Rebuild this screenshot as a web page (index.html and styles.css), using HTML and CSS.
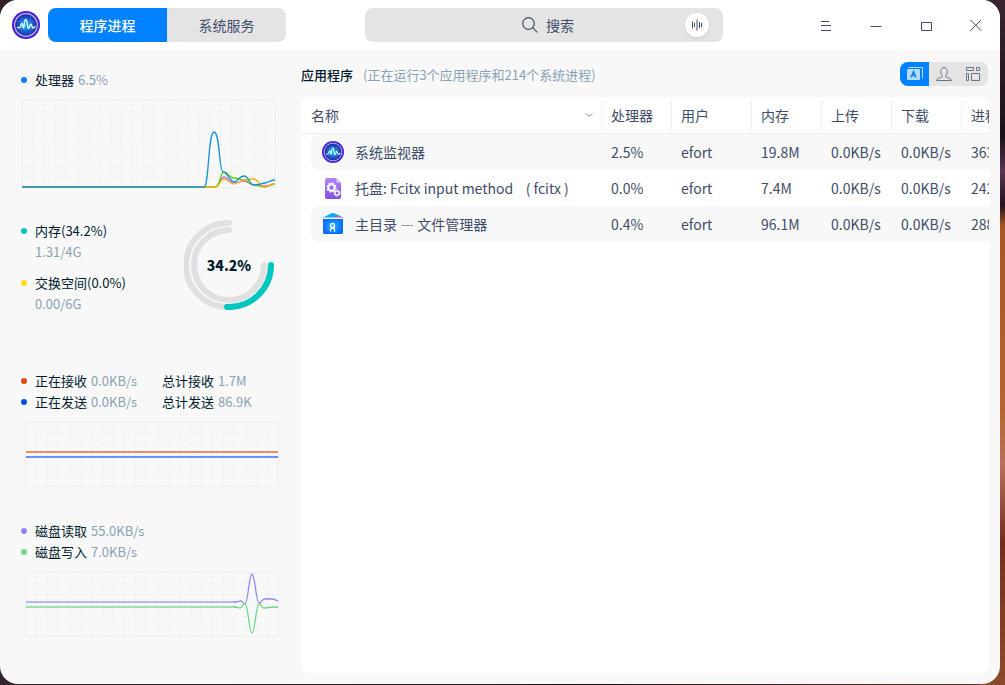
FILE: index.html
```html
<!DOCTYPE html>
<html lang="zh-CN">
<head>
    <meta charset="UTF-8">
    <meta name="viewport" content="width=device-width, initial-scale=1.0">
    <title>系统监视器</title>
    <link rel="stylesheet" href="styles.css">
</head>
<body>
    <!-- Shared icon and grid definitions -->
    <svg class="defs" width="0" height="0" aria-hidden="true">
        <defs>
            <radialGradient id="monitor-fill">
                <stop offset="0" stop-color="#16c4f5"/>
                <stop offset="0.55" stop-color="#1764cf"/>
                <stop offset="1" stop-color="#22219b"/>
            </radialGradient>
            <linearGradient id="file-fill" x1="0" y1="0" x2="0" y2="1">
                <stop offset="0" stop-color="#b087f8"/>
                <stop offset="1" stop-color="#8450e2"/>
            </linearGradient>
            <radialGradient id="folder-fill">
                <stop offset="0" stop-color="#1fb4ff"/>
                <stop offset="1" stop-color="#0b6cfa"/>
            </radialGradient>
            <pattern id="grid" width="11" height="11" patternUnits="userSpaceOnUse">
                <path d="M0 .5h2M4 .5h3M9 .5h2M.5 0v2M.5 4v3M.5 9v2" stroke="#f0f0f0" fill="none"/>
            </pattern>
            <symbol id="monitor" viewBox="0 0 28 28">
                <circle cx="14" cy="14" r="14" fill="#4b20d2"/>
                <circle cx="14" cy="14" r="11.300" fill="url(#monitor-fill)" stroke="#b9b2f5" stroke-width="1.2"/>
                <path d="M4 10.5h20M4 18h20M9.5 5v18M18.5 5v18" stroke="#5a8ee8" stroke-width=".5" opacity=".7"/>
                <path d="M5 16.500h2.500c1.800 0 1-4 2.300-4s.8 4.500 1.700 4.500S12 8.500 13.700 8.500s1.500 9 2.900 9 1-4.500 2.200-4.500 1 4 2.200 4 1-1.500 2.400-1.500" fill="none" stroke="#d8fbff" stroke-width="1.400"/>
            </symbol>
        </defs>
    </svg>

    <div class="window">
        <!-- Title bar -->
        <header class="titlebar">
            <svg class="logo" width="28" height="28"><use href="#monitor"/></svg>
            <nav class="tabs">
                <button type="button" class="tab active">程序进程</button>
                <button type="button" class="tab">系统服务</button>
            </nav>
            <form class="search">
                <svg width="16" height="16" viewBox="0 0 16 16" fill="none" stroke="#414d68" stroke-width="1.2"><circle cx="6.500" cy="6.500" r="5.800"/><path d="M10.700 10.700L15.300 15.300"/></svg>
                <input type="search" placeholder="搜索" aria-label="搜索">
                <button type="button" class="voice" aria-label="语音">
                    <svg width="12" height="12" viewBox="0 0 12 12" stroke="#414d68"><path d="M1.500 2.500v7M3.500 4v4M6 .5v11M8.500 3v6M10.500 4v4"/></svg>
                </button>
            </form>
            <div class="controls">
                <button type="button" aria-label="菜单"><svg width="12" height="12" viewBox="0 0 12 12"><path d="M1 2.500h8M1 6.500h10M1 11.500h10"/></svg></button>
                <button type="button" aria-label="最小化"><svg width="12" height="12" viewBox="0 0 12 12"><path d="M.5 7.500h11"/></svg></button>
                <button type="button" aria-label="最大化"><svg width="12" height="12" viewBox="0 0 12 12"><path d="M1.500 3.500h10v8h-10z"/></svg></button>
                <button type="button" aria-label="关闭"><svg width="12" height="12" viewBox="0 0 12 12"><path d="M.5 1l10.500 10.500M11 1L.5 11.500"/></svg></button>
            </div>
        </header>

        <div class="content">
            <!-- Resource graphs -->
            <aside class="sidebar">
                <section class="cpu">
                    <p class="stat blue">处理器 <span>6.5%</span></p>
                    <svg class="chart" width="254" height="88">
                        <rect width="254" height="88" fill="url(#grid)"/>
                        <rect class="frame" x=".5" y=".5" width="253" height="87"/>
                        <g class="lines">
                            <path stroke="#c76cf5" d="M0 87H193C197 87 198 77 202 77S208 83 212 83S218 81 222 81S228 85 232 85S239 86 243 86S248 84 253 84"/>
                            <path stroke="#5ed000" d="M0 87H193C198 87 198 72 202 72S207 78 212 78S218 80 222 80S227 85 232 85S239 87 243 87S248 84 253 84"/>
                            <path stroke="#f7b21b" d="M0 87H193C198 87 198 79 202 79S208 84 212 84S218 80 222 80S228 79 232 79S238 87 242 87S248 84 253 84"/>
                            <path stroke="#1492d8" d="M0 87H182C187 87 186 32 192 32S197 72 201 72C206 72 208 82 212 82S217 76 222 76S227 85 232 85S240 83 243 83S248 80 253 80"/>
                        </g>
                    </svg>
                </section>
                <section class="memory">
                    <div>
                        <p class="stat teal">内存(34.2%)</p>
                        <p class="amount">1.31/4G</p>
                        <p class="stat yellow">交换空间(0.0%)</p>
                        <p class="amount">0.00/6G</p>
                    </div>
                    <svg class="ring" width="90" height="90" viewBox="0 0 90 90">
                        <path d="M45 3A42 42 0 0 0 43 87M45 10A35 35 0 1 0 80 45"/>
                        <path class="used" d="M87 45A42 42 0 0 1 43 87"/>
                        <text x="45" y="51">34.2%</text>
                    </svg>
                </section>
                <section class="network">
                    <div class="pairs">
                        <p class="stat orange">正在接收 <span>0.0KB/s</span></p>
                        <p class="total">总计接收 <span>1.7M</span></p>
                        <p class="stat royal">正在发送 <span>0.0KB/s</span></p>
                        <p class="total">总计发送 <span>86.9K</span></p>
                    </div>
                    <svg class="chart small" width="254" height="65">
                        <rect width="254" height="65" fill="url(#grid)"/>
                        <rect class="frame" x=".5" y=".5" width="253" height="64"/>
                        <path stroke="#e98d68" stroke-width="2" d="M1 30H253"/>
                        <path stroke="#6694f0" stroke-width="2" d="M1 35H253"/>
                    </svg>
                </section>
                <section class="disk">
                    <p class="stat violet">磁盘读取 <span>55.0KB/s</span></p>
                    <p class="stat green">磁盘写入 <span>7.0KB/s</span></p>
                    <svg class="chart small" width="254" height="65">
                        <rect width="254" height="65" fill="url(#grid)"/>
                        <rect class="frame" x=".5" y=".5" width="253" height="64"/>
                        <path stroke="#b9b2fb" stroke-width="2" d="M1 30H211"/>
                        <path stroke="#9be2ae" stroke-width="2" d="M1 35H211"/>
                        <g class="lines">
                            <path stroke="#8f85fa" d="M209 30C213 30 214 29 216 29S218 32 220 32C223 32 224 2 227 2S231 31 234 31S236 27 240 27Q248 26 253 29"/>
                            <path stroke="#6bd988" d="M209 35C213 35 213 36 215 36S218 31 220 31C223 31 224 61 227 61S231 32 234 32S236 36 239 36S241 35 253 35"/>
                        </g>
                    </svg>
                </section>
            </aside>

            <!-- Process list -->
            <main class="main">
                <div class="toolbar">
                    <h1>应用程序</h1>
                    <p>(正在运行3个应用程序和214个系统进程)</p>
                    <div class="views">
                        <button type="button" class="active" aria-label="应用程序">
                            <svg width="16" height="16" viewBox="0 0 16 16"><path d="M1.500 1.500h14v11" fill="none" stroke="#b5dbff"/><rect y="3" width="13" height="11" rx="1" fill="#b5dbff"/><path d="M4 11.500L6.500 5.500L9 11.500M5 9.500h3" fill="none" stroke="#0081ff" stroke-width="1.400"/></svg>
                        </button>
                        <button type="button" aria-label="我的进程">
                            <svg width="16" height="16" viewBox="0 0 16 16" fill="none" stroke="#69738a"><path d="M6.300 9.500C3.800 8 4.300 1.500 8 1.500s4.200 6.500 1.700 8c-.5 1.300.5 1.800 1.800 2.200 2.500.6 3.500 1.200 4 2.800H.5c.5-1.600 1.500-2.200 4-2.800 1.300-.4 2.300-.9 1.800-2.200z"/></svg>
                        </button>
                        <button type="button" aria-label="所有进程">
                            <svg width="16" height="16" viewBox="0 0 16 16" fill="none" stroke="#69738a"><path d="M1.500 1.500h7v3h-7zM11.500 1.500h3v3h-3zM1.500 7.500h2v7h-2zM6.500 7.500h8v7h-8z"/></svg>
                        </button>
                    </div>
                </div>
                <div class="panel">
                    <table>
                        <thead>
                            <tr>
                                <th class="name"><div class="sort">名称 <svg width="8" height="4" viewBox="0 0 8 4"><path d="M.5 .5Q2.500 3 4 3T7.500 .5" fill="none" stroke="#8a93a5"/></svg></div></th>
                                <th>处理器</th>
                                <th class="user">用户</th>
                                <th>内存</th>
                                <th>上传</th>
                                <th>下载</th>
                                <th>进程号</th>
                            </tr>
                        </thead>
                        <tbody>
                            <tr>
                                <td><div class="app"><svg width="24" height="24" viewBox="-1 -1 24 24"><use href="#monitor" width="22" height="22"/></svg>系统监视器</div></td>
                                <td>2.5%</td><td>efort</td><td>19.8M</td><td>0.0KB/s</td><td>0.0KB/s</td><td>3633</td>
                            </tr>
                            <tr>
                                <td><div class="app"><svg width="24" height="24" viewBox="0 0 24 24"><path d="M6 2h9l5 5v14a2 2 0 0 1-2 2H6a2 2 0 0 1-2-2V4a2 2 0 0 1 2-2z" fill="url(#file-fill)"/><path d="M15 2l5 5h-3a2 2 0 0 1-2-2z" fill="#ceb3fb"/><g fill="none" stroke="#fff"><circle cx="10.500" cy="11.500" r="3.200" stroke-width="2"/><circle cx="10.500" cy="11.500" r="4.500" stroke-width="1.200" stroke-dasharray="1.800 1.730"/><circle cx="16" cy="17" r="2.200" stroke-width="1.300"/><circle cx="16" cy="17" r="3" stroke-dasharray="1.200 1.150"/></g></svg>托盘: Fcitx input method &nbsp;&nbsp;&nbsp;( fcitx )</div></td>
                                <td>0.0%</td><td>efort</td><td>7.4M</td><td>0.0KB/s</td><td>0.0KB/s</td><td>2421</td>
                            </tr>
                            <tr>
                                <td><div class="app"><svg width="24" height="24" viewBox="0 0 24 24"><path d="M2 8V5.500L10 1.500q2-1 4 0l8 4V8z" fill="#16a2f4"/><path d="M13 5.500l5-2 3 2V7h-8z" fill="#d75a86"/><path d="M2 6h20v14.500a1.500 1.500 0 0 1-1.500 1.500h-17A1.500 1.500 0 0 1 2 20.500z" fill="url(#folder-fill)"/><path d="M2 6.500q0-1 1.500-1h17q1.500 0 1.500 1V7H2z" fill="#eef8ff"/><g fill="none" stroke="#fff" stroke-width="1.300"><circle cx="11.500" cy="13.500" r="2"/><path d="M9.500 19.500v-2q0-1.500 2-1.500t2 1.500v2.500"/></g></svg>主目录 — 文件管理器</div></td>
                                <td>0.4%</td><td>efort</td><td>96.1M</td><td>0.0KB/s</td><td>0.0KB/s</td><td>2884</td>
                            </tr>
                        </tbody>
                    </table>
                </div>
            </main>
        </div>
    </div>
</body>
</html>
```
FILE: styles.css
```css
/* General Styles */
* {
    margin: 0;
    padding: 0;
    box-sizing: border-box;
}
body {
    height: 100vh;
    padding: 0 5px 1px 0;
    overflow: hidden;
    font-family: "Noto Sans CJK SC", sans-serif;
    font-size: 13px;
    line-height: 21px;
    color: #001a2e;
    background:
        linear-gradient(#3a2433 0%, #1a1018 20%, #5a3550 25%, #24121e 30%, #a8561f 33%, #b5662f 60%, #b8705c 68%, #70301c 79%, #8c4a2c 100%) right / 25px 100% no-repeat,
        linear-gradient(90deg, #33222c, #1e1116 60%, #6b3424);
}
button {
    border: none;
    background: none;
    font: inherit;
    color: inherit;
    cursor: pointer;
}
svg {
    display: block;
    flex-shrink: 0;
}
.defs {
    position: absolute;
}
.window {
    display: flex;
    flex-direction: column;
    height: 100%;
    border-radius: 18px;
    overflow: hidden;
    background: #f8f8f8;
}

/* Title bar */
.titlebar {
    display: flex;
    align-items: center;
    height: 50px;
    flex-shrink: 0;
    padding-left: 12px;
    background: #fff;
    font-size: 14px;
    color: #414d68;
}
.tabs {
    display: flex;
    margin: 0 2px 0 8px;
    border-radius: 8px;
    overflow: hidden;
    background: #e4e4e4;
}
.tab {
    width: 119px;
    height: 34px;
}
.tab.active {
    background: #0081ff;
    color: #fff;
    font-weight: 500;
}
.search {
    display: flex;
    align-items: center;
    width: 358px;
    height: 34px;
    margin: 0 auto;
    padding: 0 14px 0 157px;
    border-radius: 8px;
    background: #e4e4e4;
}
.search input {
    flex: 1;
    min-width: 0;
    height: 34px;
    margin-left: 8px;
    border: none;
    outline: none;
    background: none;
    font: inherit;
    color: inherit;
}
.search input::placeholder {
    color: #414d68;
}
.voice {
    display: flex;
    align-items: center;
    justify-content: center;
    width: 24px;
    height: 24px;
    border-radius: 50%;
    background: #fff;
    box-shadow: 0 2px 4px rgba(0, 0, 0, 0.08);
}
.controls {
    display: flex;
}
.controls button {
    display: flex;
    align-items: center;
    justify-content: center;
    width: 50px;
    height: 50px;
    padding-left: 2px;
}
.controls svg {
    fill: none;
    stroke: #414d68;
}

/* Sidebar */
.content {
    display: flex;
    flex: 1;
    min-height: 0;
}
.sidebar {
    width: 301px;
    flex-shrink: 0;
    padding: 19px 22px 0;
}
.sidebar span,
.sidebar .amount {
    color: #8aa1b4;
}
.stat {
    display: flex;
    align-items: center;
    gap: 4px;
}
.stat::before {
    content: "";
    width: 6px;
    height: 6px;
    margin: 0 4px 0 -1px;
    border-radius: 50%;
    background: currentColor;
}
.total {
    display: flex;
    gap: 4px;
}
.blue::before { background: #0081ff; }
.teal::before { background: #00c5c0; }
.yellow::before { background: #ffdc1a; }
.orange::before { background: #e34a0c; }
.royal::before { background: #0a50ee; }
.violet::before { background: #8f85fa; }
.green::before { background: #6bd988; }
.chart {
    margin-top: 10px;
}
.chart.small {
    margin-left: 3px;
}
.frame {
    fill: none;
    stroke: #eee;
}
.lines {
    fill: none;
    stroke-width: 1.3;
}
.memory {
    display: flex;
    justify-content: space-between;
    margin-top: 32px;
    padding-right: 5px;
}
.memory .amount {
    margin-bottom: 10px;
    padding-left: 13px;
}
.ring {
    fill: none;
    stroke: #e0e0e0;
    stroke-width: 6;
    stroke-linecap: round;
}
.ring .used {
    stroke: #00c5c0;
}
.ring text {
    fill: #001a2e;
    stroke: none;
    font-size: 14px;
    font-weight: 900;
    text-anchor: middle;
}
.network {
    margin-top: 46px;
}
.pairs {
    display: grid;
    grid-template-columns: 140px 1fr;
}
.disk {
    margin-top: 33px;
}

/* Process list */
.main {
    display: flex;
    flex-direction: column;
    flex: 1;
    min-width: 0;
    padding: 12px 11px 11px 0;
}
.toolbar {
    display: flex;
    align-items: center;
    gap: 10px;
    height: 24px;
    margin-bottom: 11px;
    padding-right: 1px;
}
.toolbar h1 {
    font-size: 13px;
    font-weight: 500;
}
.toolbar p {
    color: #8aa1b4;
}
.views {
    display: flex;
    width: 88px;
    margin-left: auto;
    border-radius: 8px;
    overflow: hidden;
    background: #e4e4e4;
}
.views button {
    display: flex;
    align-items: center;
    justify-content: center;
    flex: 1;
    height: 24px;
}
.views .active {
    background: #0081ff;
}
.panel {
    flex: 1;
    border-radius: 8px;
    overflow: hidden;
    background: #fff;
}
table {
    width: 731px;
    table-layout: fixed;
    border-spacing: 0;
    font-size: 14px;
    color: #414d68;
}
th {
    width: 70px;
    height: 37px;
    padding: 0 9px;
    border-bottom: 1px solid #eee;
    background: linear-gradient(#eee, #eee) right / 1px 29px no-repeat;
    font-weight: 400;
    text-align: left;
    white-space: nowrap;
}
.name {
    width: 301px;
    padding-left: 10px;
}
.user {
    width: 80px;
}
.sort {
    display: flex;
    align-items: center;
    justify-content: space-between;
}
td {
    height: 36px;
    padding: 0 9px;
    white-space: nowrap;
}
tbody tr:nth-child(odd) td {
    background-color: #f8f8f8;
}
td:first-child {
    padding-left: 10px;
    border-left: 10px solid transparent;
    border-radius: 18px 0 0 18px / 8px 0 0 8px;
    background-clip: padding-box;
}
.app {
    display: flex;
    align-items: center;
    gap: 10px;
    white-space: pre;
}
```
